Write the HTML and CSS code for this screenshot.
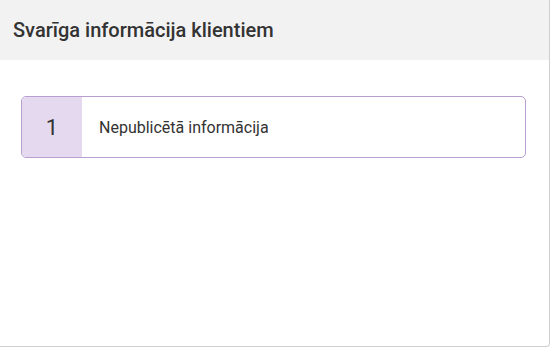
FILE: index.html
```html
<!DOCTYPE html>
<html lang="lv">
<head>
  <meta charset="UTF-8" />
  <meta name="viewport" content="width=device-width, initial-scale=1.0"/>
  <title>Svarīga informācija klientiem</title>
  <link rel="stylesheet" href="styles.css">
</head>
<body>
  <div class="panel">
    <div class="panel-head">Svarīga informācija klientiem</div>
    <div class="panel-body">
      <div class="info-item">
        <div class="info-num">1</div>
        <div class="info-text">Nepublicētā informācija</div>
      </div>
    </div>
  </div>
</body>
</html>
```

FILE: styles.css
```css
* {
  box-sizing: border-box;
}
body {
  margin: 0;
  font-family: Roboto, 'Noto Sans', sans-serif;
  background: #fff;
  color: #333;
}
.panel {
  width: 550px;
  height: 347px;
  background: #fff;
  border-right: 1px solid #cfcfcf;
  border-bottom: 1px solid #cfcfcf;
  border-bottom-right-radius: 4px;
}
.panel-head {
  height: 60px;
  line-height: 60px;
  padding: 0 13px;
  background: #f2f2f2;
  font-size: 20px;
  font-weight: 500;
  color: #333;
}
.panel-body {
  padding: 36px 23px 0 21px;
}
.info-item {
  display: flex;
  height: 62px;
  border: 1px solid #b7a0cf;
  border-radius: 5px;
  overflow: hidden;
}
.info-num {
  width: 60px;
  display: flex;
  align-items: center;
  justify-content: center;
  background: #e5d9ef;
  font-size: 22px;
  color: #333;
}
.info-text {
  display: flex;
  align-items: center;
  padding-left: 17px;
  font-size: 16px;
  color: #333;
}
```
